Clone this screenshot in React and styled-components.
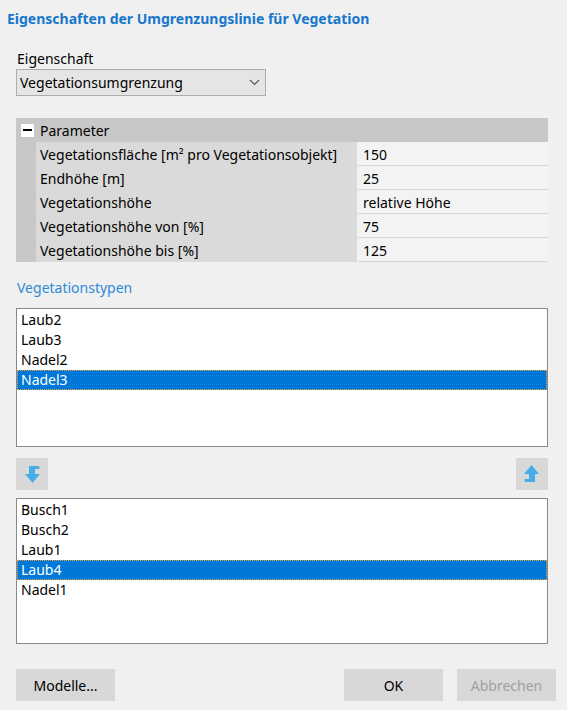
import React from 'react'
import styled, { createGlobalStyle } from 'styled-components'

const GlobalStyle = createGlobalStyle`
  html, body {
    margin: 0;
    padding: 0;
    background: #f0f0f0;
  }
  body {
    font-family: "Noto Sans", "Open Sans", sans-serif;
    font-size: 14px;
    color: #000;
  }
`

const Dialog = styled.div`
  width: 567px;
  height: 710px;
  background: #f0f0f0;
  box-sizing: border-box;
  padding: 9px 11px 0 0;
  display: flex;
  flex-direction: column;
`

const Title = styled.div`
  margin-left: 7px;
  font-weight: 700;
  font-size: 14px;
  line-height: 20px;
  color: #1677cc;
`

const Body = styled.div`
  padding: 0 8px 0 16px;
  display: flex;
  flex-direction: column;
`

const FieldLabel = styled.div`
  margin-top: 20px;
  margin-left: 1px;
  line-height: 20px;
`

const Combo = styled.div`
  width: 250px;
  height: 27px;
  box-sizing: border-box;
  background: #e5e5e5;
  border: 1px solid #adadad;
  display: flex;
  align-items: center;
  justify-content: space-between;
  padding: 0 5px 0 3px;
`

const Grid = styled.div`
  margin-top: 22px;
  display: grid;
  grid-template-columns: 20px 321px 1fr;
`

const Gutter = styled.div`
  background: #c8c8c8;
`

const Header = styled.div`
  grid-column: 1 / span 3;
  height: 24px;
  background: #c8c8c8;
  display: flex;
  align-items: center;
  padding-left: 5px;
  gap: 6px;
`

const Toggle = styled.span`
  width: 13px;
  height: 13px;
  background: #fff;
  display: flex;
  align-items: center;
  justify-content: center;
  &::after {
    content: '';
    width: 9px;
    height: 2px;
    background: #000;
  }
`

const NameCell = styled.div`
  height: 24px;
  background: #dadada;
  padding-left: 4px;
  line-height: 25px;
  white-space: nowrap;
`

const ValueCell = styled.div`
  height: 24px;
  box-sizing: border-box;
  margin-left: 1px;
  background: #f3f3f3;
  border-bottom: 1px solid #d4d4d4;
  padding-left: 5px;
  line-height: 25px;
`

const SectionLabel = styled.div`
  margin-top: 16px;
  margin-left: 1px;
  line-height: 20px;
  color: #2e8ad8;
`

const List = styled.div`
  margin-top: ${p => p.$gap}px;
  height: ${p => p.$height}px;
  box-sizing: border-box;
  background: #fff;
  border: 1px solid #858990;
  padding: 1px 0;
`

const Item = styled.div`
  height: 20px;
  box-sizing: border-box;
  line-height: 18px;
  padding-left: 3px;
  border: 1px solid ${p => (p.$selected ? '#f0a040' : 'transparent')};
  border-style: ${p => (p.$selected ? 'dotted' : 'solid')};
  background: ${p => (p.$selected ? '#0078d7' : 'transparent')};
  color: ${p => (p.$selected ? '#fff' : '#000')};
`

const ArrowRow = styled.div`
  margin-top: 11px;
  display: flex;
  justify-content: space-between;
`

const IconButton = styled.div`
  width: 32px;
  height: 32px;
  background: #d8d8d8;
  display: flex;
  align-items: center;
  justify-content: center;
`

const Footer = styled.div`
  margin-top: 25px;
  padding-left: 16px;
  display: flex;
  align-items: center;
`

const Button = styled.div`
  width: 99px;
  height: 32px;
  background: #d8d8d8;
  display: flex;
  align-items: center;
  justify-content: center;
  color: ${p => (p.$disabled ? '#a0a0a0' : '#000')};
  margin-left: ${p => p.$ml || 0}px;
`

const Spacer = styled.div`
  flex: 1;
`

const Arrow = ({ up }) => (
  <svg width="32" height="32" viewBox="0 0 32 32" style={up ? { transform: 'rotate(180deg)' } : undefined}>
    <path d="M13 8 H22 Q23.5 8 23.5 9.5 V11 H19 V16 H24 L16.5 25 L9 16 H13 Z" fill="#46ade8" />
  </svg>
)

const Chevron = () => (
  <svg width="11" height="7" viewBox="0 0 11 7">
    <path d="M1 1 L5.5 5.5 L10 1" fill="none" stroke="#555" strokeWidth="1.1" />
  </svg>
)

const params = [
  ['Vegetationsfläche [m² pro Vegetationsobjekt]', '150'],
  ['Endhöhe [m]', '25'],
  ['Vegetationshöhe', 'relative Höhe'],
  ['Vegetationshöhe von [%]', '75'],
  ['Vegetationshöhe bis [%]', '125'],
]

const upper = ['Laub2', 'Laub3', 'Nadel2', 'Nadel3']
const lower = ['Busch1', 'Busch2', 'Laub1', 'Laub4', 'Nadel1']

const App = () => {
  return (
    <Dialog>
      <GlobalStyle />
      <Title>Eigenschaften der Umgrenzungslinie für Vegetation</Title>
      <Body>
        <FieldLabel>Eigenschaft</FieldLabel>
        <Combo>
          <span>Vegetationsumgrenzung</span>
          <Chevron />
        </Combo>
        <Grid>
          <Header>
            <Toggle />
            <span>Parameter</span>
          </Header>
          {params.map(([name, value]) => (
            <React.Fragment key={name}>
              <Gutter />
              <NameCell>{name}</NameCell>
              <ValueCell>{value}</ValueCell>
            </React.Fragment>
          ))}
        </Grid>
        <SectionLabel>Vegetationstypen</SectionLabel>
        <List $gap={10} $height={139}>
          {upper.map(i => (
            <Item key={i} $selected={i === 'Nadel3'}>{i}</Item>
          ))}
        </List>
        <ArrowRow>
          <IconButton><Arrow /></IconButton>
          <IconButton><Arrow up /></IconButton>
        </ArrowRow>
        <List $gap={8} $height={146}>
          {lower.map(i => (
            <Item key={i} $selected={i === 'Laub4'}>{i}</Item>
          ))}
        </List>
      </Body>
      <Footer>
        <Button>Modelle...</Button>
        <Spacer />
        <Button>OK</Button>
        <Button $ml={14} $disabled>Abbrechen</Button>
      </Footer>
    </Dialog>
  )
}

export default App
